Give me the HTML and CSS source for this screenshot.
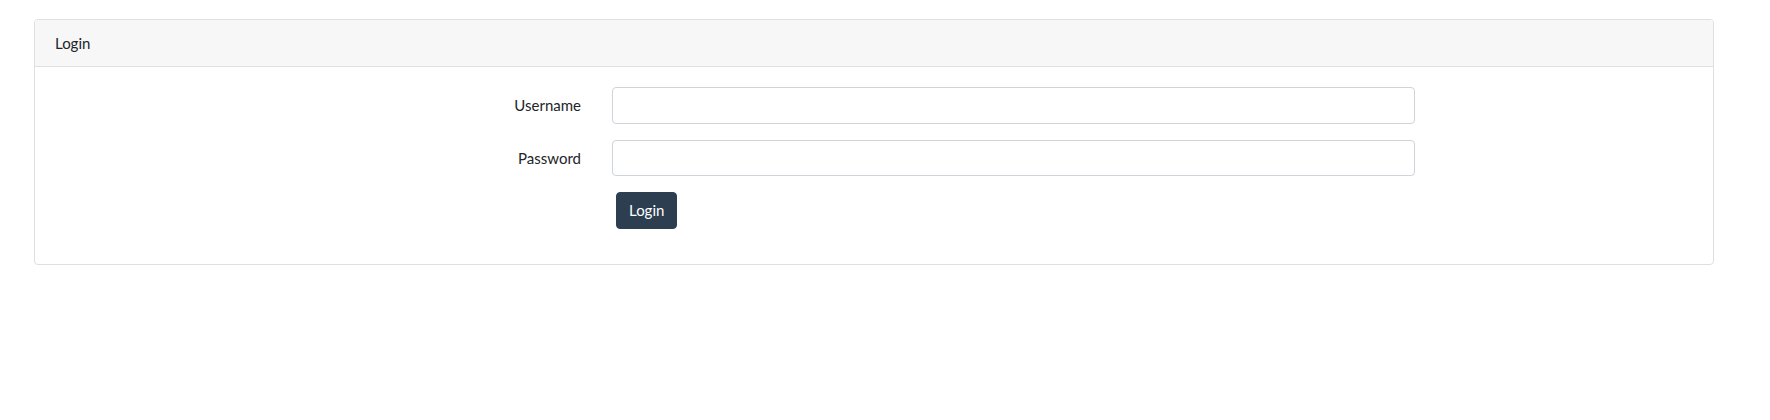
FILE: index.html
```html
<!DOCTYPE html>
<html>
<head>
<meta charset="utf-8">
<link rel="stylesheet" href="styles.css">
</head>
<body>
<div class="page">
  <div class="card">
    <div class="card-header">Login</div>
    <div class="card-body">
      <form class="form">
        <div class="form-row">
          <label class="form-label" for="u">Username</label>
          <div class="form-field"><input class="form-input" id="u" type="text"></div>
        </div>
        <div class="form-row">
          <label class="form-label" for="p">Password</label>
          <div class="form-field"><input class="form-input" id="p" type="password"></div>
        </div>
        <div class="form-row">
          <div class="form-label"></div>
          <div class="form-field"><button class="btn" type="button">Login</button></div>
        </div>
      </form>
    </div>
  </div>
</div>
</body>
</html>
```

FILE: styles.css
```css
* { box-sizing: border-box; }
html, body { margin: 0; padding: 0; background: #fff; }
body {
  font-family: Lato, "Open Sans", "Liberation Sans", sans-serif;
  font-size: 15px;
  line-height: 1.5;
  color: #212529;
}
.page {
  padding: 19px 56px 0 34px;
}
.card {
  border: 1px solid #dfdfdf;
  border-radius: 4px;
  background: #fff;
}
.card-header {
  background: #f7f7f7;
  border-bottom: 1px solid #dfdfdf;
  padding: 12px 20px 11px;
  border-radius: 3px 3px 0 0;
  height: 47px;
}
.card-body {
  padding: 20px 20px 19px;
}
.form-row {
  display: grid;
  grid-template-columns: 557px 834px;
  margin: 0 -15px 16px;
}
.form-label {
  text-align: right;
  padding: 7px 16px 0 15px;
}
.form-field {
  padding: 0 15px;
}
.form-input {
  display: block;
  width: 803px;
  height: 36.5px;
  padding: 6px 12px;
  font: inherit;
  color: #495057;
  border: 1px solid #ced4da;
  border-radius: 4px;
  background: #fff;
}
.btn {
  display: inline-block;
  margin-left: 4px;
  height: 36.5px;
  padding: 6px 12px;
  font: inherit;
  color: #fff;
  background: #2c3e50;
  border: 1px solid #2c3e50;
  border-radius: 4px;
}
```
